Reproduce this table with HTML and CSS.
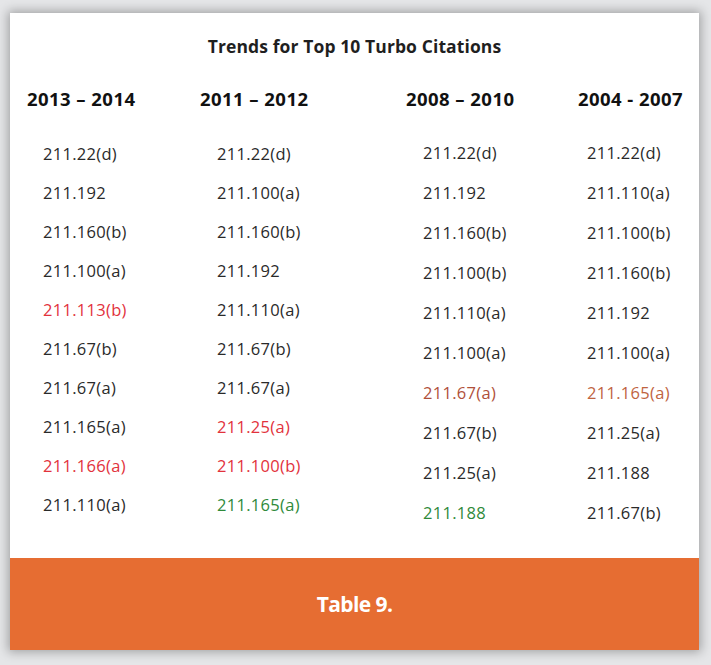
FILE: index.html
```html
<!DOCTYPE html>
<html lang="en">
<head>
<meta charset="utf-8">
<title>Trends for Top 10 Turbo Citations</title>
<link rel="stylesheet" href="styles.css">
</head>
<body>
<div class="card">
  <div class="sheet">
    <h1 class="title">Trends for Top 10 Turbo Citations</h1>
    <div class="grid">
      <div class="col col-1">
        <div class="head">2013 – 2014</div>
        <ul class="list list-tight">
          <li>211.22(d)</li>
          <li>211.192</li>
          <li>211.160(b)</li>
          <li>211.100(a)</li>
          <li class="red">211.113(b)</li>
          <li>211.67(b)</li>
          <li>211.67(a)</li>
          <li>211.165(a)</li>
          <li class="red">211.166(a)</li>
          <li>211.110(a)</li>
        </ul>
      </div>
      <div class="col col-2">
        <div class="head">2011 – 2012</div>
        <ul class="list list-tight">
          <li>211.22(d)</li>
          <li>211.100(a)</li>
          <li>211.160(b)</li>
          <li>211.192</li>
          <li>211.110(a)</li>
          <li>211.67(b)</li>
          <li>211.67(a)</li>
          <li class="red">211.25(a)</li>
          <li class="red">211.100(b)</li>
          <li class="green">211.165(a)</li>
        </ul>
      </div>
      <div class="col col-3">
        <div class="head">2008 – 2010</div>
        <ul class="list list-loose">
          <li>211.22(d)</li>
          <li>211.192</li>
          <li>211.160(b)</li>
          <li>211.100(b)</li>
          <li>211.110(a)</li>
          <li>211.100(a)</li>
          <li class="brown">211.67(a)</li>
          <li>211.67(b)</li>
          <li>211.25(a)</li>
          <li class="green">211.188</li>
        </ul>
      </div>
      <div class="col col-4">
        <div class="head">2004 - 2007</div>
        <ul class="list list-loose">
          <li>211.22(d)</li>
          <li>211.110(a)</li>
          <li>211.100(b)</li>
          <li>211.160(b)</li>
          <li>211.192</li>
          <li>211.100(a)</li>
          <li class="brown-light">211.165(a)</li>
          <li>211.25(a)</li>
          <li>211.188</li>
          <li>211.67(b)</li>
        </ul>
      </div>
    </div>
  </div>
  <div class="footer">Table 9.</div>
</div>
</body>
</html>
```
FILE: styles.css
```css
* { box-sizing: border-box; }
html, body {
  margin: 0;
  padding: 0;
  background: #e5e6e8;
}
body {
  width: 711px;
  height: 665px;
  padding: 13px 12px 15px 10px;
  font-family: "Open Sans", "Noto Sans", sans-serif;
  color: #262626;
}
.card {
  width: 689px;
  height: 637px;
  display: flex;
  flex-direction: column;
  background: #ffffff;
  box-shadow: 0 0 10px 2px rgba(0, 0, 0, 0.3);
}
.sheet {
  height: 545px;
  padding: 21px 0 0 17px;
}
.title {
  margin: 0 0 0 -17px;
  text-align: center;
  font-size: 17.5px;
  font-weight: 700;
  letter-spacing: 0.1px;
  line-height: 24px;
  color: #1f1f1f;
}
.grid {
  margin-top: 29px;
  display: grid;
  grid-template-columns: 173px 206px 172px 1fr;
}
.head {
  font-size: 18.5px;
  font-weight: 700;
  letter-spacing: 0.45px;
  line-height: 24px;
  color: #111111;
  white-space: nowrap;
}
.list {
  list-style: none;
  margin: 0;
  padding: 0;
  font-size: 16.5px;
  letter-spacing: 0.3px;
  color: #2a2a2a;
}
.list-tight { margin-top: 23px; line-height: 39px; }
.list-loose { margin-top: 22px; line-height: 40px; }
.col-1 .list { padding-left: 16px; }
.col-2 .list { padding-left: 17px; }
.col-3 .list { padding-left: 17px; }
.col-4 .list { padding-left: 9px; }
.red { color: #e2323c; }
.green { color: #2f8a3a; }
.brown { color: #b0503a; }
.brown-light { color: #c0643f; }
.footer {
  height: 92px;
  background: #e66d32;
  display: flex;
  align-items: center;
  justify-content: center;
  color: #ffffff;
  font-size: 21px;
  font-weight: 700;
  letter-spacing: -0.6px;
}
```
